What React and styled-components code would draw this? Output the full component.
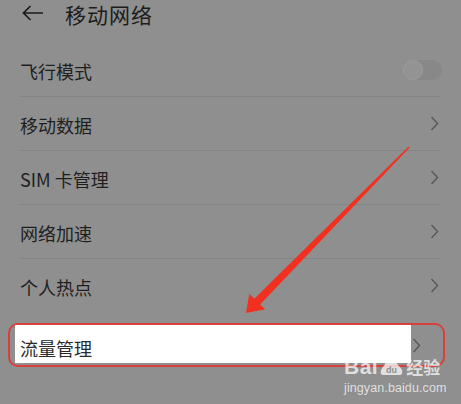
import React from "react";
import styled, { createGlobalStyle } from "styled-components";

const Global = createGlobalStyle`
  html, body { margin: 0; padding: 0; }
  body {
    background: #8f8f8f;
    font-family: "Noto Sans CJK SC", "Noto Sans", sans-serif;
    width: 461px; height: 404px; overflow: hidden;
  }
`;

const Screen = styled.div`
  position: relative;
  width: 461px;
  height: 404px;
  background: #8f8f8f;
  color: #202020;
`;

const Header = styled.div`
  display: flex;
  align-items: center;
  height: 26px;
  padding: 1px 0 0 22px;
  margin-bottom: 16px;
`;

const BackButton = styled.svg`
  width: 22px;
  height: 16px;
  margin-right: 21px;
  margin-top: -2px;
`;

const Title = styled.div`
  font-size: 21px;
  line-height: 26px;
  color: #1c1c1c;
  letter-spacing: 1px;
`;

const Row = styled.div`
  display: flex;
  align-items: center;
  justify-content: space-between;
  height: 53px;
  margin: 0 20px 0 20px;
  border-bottom: 1px solid ${(p) => (p.$last ? "transparent" : "#848484")};
`;

const Label = styled.span`
  font-size: 18px;
  line-height: 24px;
  color: #1f1f1f;
  padding-top: 3px;
`;

const Chevron = styled.svg`
  width: 9px;
  height: 15px;
  margin-right: 2px;
  flex: none;
`;

const Toggle = styled.div`
  width: 39px;
  height: 20px;
  border-radius: 10px;
  background: #888888;
  display: flex;
  align-items: center;
  margin-right: -1px;
`;

const Knob = styled.div`
  width: 18px;
  height: 18px;
  border-radius: 50%;
  background: #939393;
  border: 1px solid #9c9c9c;
`;

const RedFrame = styled.div`
  margin: 10px 16px 0 8px;
  height: 40px;
  border: 2px solid #d8403c;
  border-radius: 10px;
  display: flex;
  align-items: center;
  justify-content: space-between;
  padding-left: 5px;
  padding-right: 20px;
`;

const WhiteBox = styled.div`
  width: 396px;
  height: 38px;
  background: #ffffff;
  display: flex;
  align-items: center;
  padding-left: 5px;
  box-sizing: border-box;
  align-self: flex-start;
`;

const HiLabel = styled(Label)`
  color: #2a2a2a;
  padding-top: 8px;
`;

const ArrowOverlay = styled.svg`
  position: absolute;
  left: 0;
  top: 0;
  pointer-events: none;
`;

const Watermark = styled.div`
  position: absolute;
  left: 344px;
  top: 343px;
  display: flex;
  flex-direction: column;
  align-items: flex-start;
  color: rgba(255, 255, 255, 0.72);
  font-family: "Liberation Sans", Arial, sans-serif;
`;

const LogoLine = styled.div`
  display: flex;
  align-items: flex-end;
  height: 34px;
`;

const Bai = styled.span`
  font-size: 21px;
  font-weight: bold;
  line-height: 20px;
  letter-spacing: 0.5px;
`;

const Paw = styled.svg`
  width: 26px;
  height: 34px;
  margin: 0 1px 0 1px;
`;

const Jy = styled.span`
  font-family: "Noto Sans CJK SC", sans-serif;
  font-size: 17px;
  line-height: 20px;
  font-weight: bold;
`;

const Url = styled.span`
  font-size: 12.5px;
  line-height: 16px;
  margin-top: 3px;
  letter-spacing: 0.1px;
`;

const ChevronIcon = () => (
  <Chevron viewBox="0 0 9 15">
    <path d="M1.5 1 L7.5 7.5 L1.5 14" fill="none" stroke="#5a5a5a" strokeWidth="1.5" />
  </Chevron>
);

const items = ["移动数据", "SIM 卡管理", "网络加速", "个人热点"];

export default function App() {
  return (
    <Screen>
      <Global />
      <Header>
        <BackButton viewBox="0 0 22 16">
          <path d="M21 8 H2 M8.5 1 L1.5 8 L8.5 15" fill="none" stroke="#1c1c1c" strokeWidth="1.7" />
        </BackButton>
        <Title>移动网络</Title>
      </Header>
      <Row>
        <Label>飞行模式</Label>
        <Toggle>
          <Knob />
        </Toggle>
      </Row>
      {items.map((t, i) => (
        <Row key={t} $last={i === items.length - 1}>
          <Label>{t}</Label>
          <ChevronIcon />
        </Row>
      ))}
      <RedFrame>
        <WhiteBox>
          <HiLabel>流量管理</HiLabel>
        </WhiteBox>
        <ChevronIcon />
      </RedFrame>
      <ArrowOverlay width="461" height="404" viewBox="0 0 461 404">
        <polygon
          points="246,313 249.3,293.9 254.3,298.8 408.6,146.6 409.6,147.6 260.1,304.4 265.1,309.3"
          fill="#f2301f"
        />
      </ArrowOverlay>
      <Watermark>
        <LogoLine>
          <Bai>Bai</Bai>
          <Paw viewBox="0 0 26 34">
            <g fill="none" stroke="rgba(255,255,255,0.72)" strokeWidth="1.3">
              <ellipse cx="8" cy="4" rx="2.6" ry="3.2" />
              <ellipse cx="15" cy="3.5" rx="2.6" ry="3.2" />
              <ellipse cx="3.5" cy="10" rx="2.4" ry="3" />
              <ellipse cx="20" cy="9.5" rx="2.4" ry="3" />
            </g>
            <path d="M4 32 C1 32 1 27 4 24 C7 21 8 15 12 15 C16 15 17 21 21 24 C24 27 24 32 21 32 Z" fill="rgba(255,255,255,0.72)" />
            <text x="12.5" y="30" textAnchor="middle" fontSize="9" fontWeight="bold" fill="#8f8f8f" fontFamily="Liberation Sans, sans-serif">du</text>
          </Paw>
          <Jy>经验</Jy>
        </LogoLine>
        <Url>jingyan.baidu.com</Url>
      </Watermark>
    </Screen>
  );
}
